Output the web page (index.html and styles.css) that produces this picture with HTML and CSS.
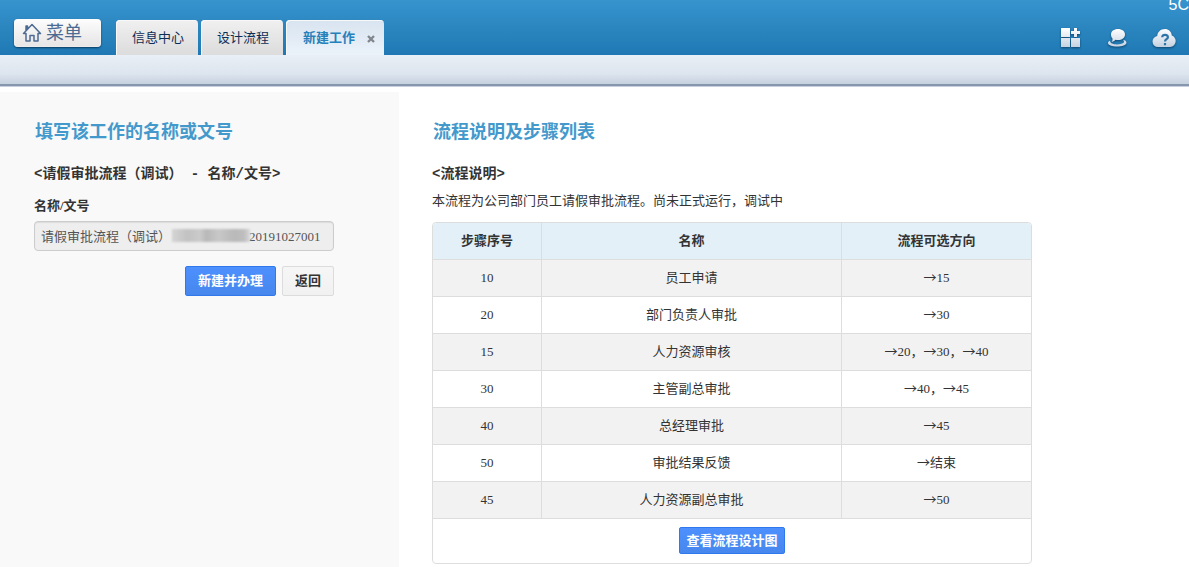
FILE: index.html
```html
<!DOCTYPE html>
<html lang="zh-CN">
<head>
<meta charset="utf-8">
<title>新建工作</title>
<link rel="stylesheet" href="styles.css">
</head>
<body>
<header class="topbar">
  <button class="menu-btn" type="button">
    <svg width="20" height="20" viewBox="0 0 20 20" fill="none" stroke="#4c6b93" stroke-width="1.5" stroke-linejoin="round" stroke-linecap="round"><path d="M1.5 10.5 L10 1.5 L18.500 10.500 H16 V18 H12 V12.500 H8 V18 H4 V10.500 Z M4 7.500 V3 H5.500 V6"/></svg>
    <span>菜单</span>
  </button>
  <nav class="tabs">
    <a class="tab" href="#">信息中心</a>
    <a class="tab" href="#">设计流程</a>
    <div class="tab tab-active"><a href="#">新建工作</a><button class="tab-close" type="button" aria-label="关闭"><svg width="8" height="8" viewBox="0 0 8 8"><path d="M1 1 L7 7 M7 1 L1 7" stroke="#81868d" stroke-width="2.400"/></svg></button></div>
  </nav>
  <div class="tools">
    <button class="tool" type="button" aria-label="应用">
      <svg width="24" height="24" viewBox="0 0 24 24" fill="url(#silver)"><defs><linearGradient id="silver" x1="0" y1="0" x2="0" y2="24" gradientUnits="userSpaceOnUse"><stop offset="0.100" stop-color="#ffffff"/><stop offset="0.900" stop-color="#c3d0e0"/></linearGradient></defs><path d="M3 2h9v9h-9z M3 12h9v9h-9z M13 12h9v9h-9z M16 2h3v3h3v3h-3v3h-3v-3h-3v-3h3z"/></svg>
    </button>
    <button class="tool" type="button" aria-label="消息">
      <svg width="24" height="24" viewBox="0 0 24 24" fill="url(#silver)"><path d="M13 3c4.200 0 7 2.300 7 5.400 0 3.200-3 5.600-7 5.600-1 0-1.800-.1-2.500-.3-1.300 1.400-2.800 2-4 2.100.9-.9 1.100-2 1-3.400C6.500 11.400 6 10 6 8.400 6 5.300 8.800 3 13 3z"/><path d="M5 14.800c-1.400.5-2 1.300-2 2.200 0 2.200 4 3.500 9 3.500s9.500-1.500 9.500-3.800c0-1.500-1.500-2.400-3.500-2.900 1.200 1.200 1.500 2.400.2 3.300-1.400.9-3.700 1.300-6.200 1.300-4 0-7-1.200-7-3.600z"/></svg>
    </button>
    <button class="tool" type="button" aria-label="帮助">
      <svg width="24" height="24" viewBox="0 0 24 24" fill="url(#silver)"><path d="M6 21a5.500 5.500 0 0 1-5.500-5.500c0-3 2-5 4.700-5.600C5.600 5.800 8.800 3 12.800 3c3.800 0 6.700 2.600 7 6.400 2.300.8 3.900 3 3.900 5.700A5.800 5.800 0 0 1 18 21z"/><path d="M10.200 11.300c0-1.600 1.200-2.500 2.800-2.500s2.900.9 2.900 2.400c0 2-2.900 2.100-2.900 4.300M13 17v2.300" fill="none" stroke="#2c75aa" stroke-width="2.200"/></svg>
    </button>
  </div>
  <div class="weather">5C</div>
</header>
<div class="subbar"></div>
<main class="content">
  <section class="form-panel">
    <h1 class="title">填写该工作的名称或文号</h1>
    <form>
      <h2 class="subtitle">&lt;请假审批流程（调试） - 名称/文号&gt;</h2>
      <label class="label" for="docname">名称/文号</label>
      <div class="field">
        <input class="text-input" id="docname" type="text" value="请假审批流程（调试）　　　　　　  20191027001" readonly>
        <span class="smudge"></span>
      </div>
      <div class="actions">
        <button class="btn btn-primary" type="button">新建并办理</button>
        <button class="btn" type="button">返回</button>
      </div>
    </form>
  </section>
  <section class="info-panel">
    <h1 class="title">流程说明及步骤列表</h1>
    <h2 class="subtitle">&lt;流程说明&gt;</h2>
    <p class="desc">本流程为公司部门员工请假审批流程。尚未正式运行，调试中</p>
    <table class="steps">
      <colgroup><col class="col-no"><col class="col-name"><col class="col-next"></colgroup>
      <thead><tr><th>步骤序号</th><th>名称</th><th>流程可选方向</th></tr></thead>
      <tbody>
        <tr><td>10</td><td>员工申请</td><td><span class="arrow">→</span>15</td></tr>
        <tr><td>20</td><td>部门负责人审批</td><td><span class="arrow">→</span>30</td></tr>
        <tr><td>15</td><td>人力资源审核</td><td><span class="arrow">→</span>20，<span class="arrow">→</span>30，<span class="arrow">→</span>40</td></tr>
        <tr><td>30</td><td>主管副总审批</td><td><span class="arrow">→</span>40，<span class="arrow">→</span>45</td></tr>
        <tr><td>40</td><td>总经理审批</td><td><span class="arrow">→</span>45</td></tr>
        <tr><td>50</td><td>审批结果反馈</td><td><span class="arrow">→</span>结束</td></tr>
        <tr><td>45</td><td>人力资源副总审批</td><td><span class="arrow">→</span>50</td></tr>
      </tbody>
      <tfoot><tr><td colspan="3"><button class="btn btn-primary btn-small" type="button">查看流程设计图</button></td></tr></tfoot>
    </table>
  </section>
</main>
</body>
</html>
```

FILE: styles.css
```css
* { box-sizing: border-box; }
body {
  margin: 0;
  min-height: 100vh;
  display: flex;
  flex-direction: column;
  background: #fff;
  color: #333;
  font: 13px/20px "Liberation Serif", "Noto Sans CJK SC", sans-serif;
}
button, input { font: inherit; color: inherit; }
button { cursor: pointer; }

.topbar {
  position: relative;
  display: flex;
  height: 55px;
  padding-left: 14px;
  background: linear-gradient(#3794cd, #1f78b3);
}
.menu-btn {
  display: flex;
  align-items: center;
  gap: 4px;
  width: 87px;
  height: 28px;
  margin-top: 19px;
  padding: 0 8px;
  border: 0;
  border-radius: 4px;
  background: linear-gradient(#fdfdfd, #e6e4e4);
  box-shadow: 0 1px 2px rgba(0, 30, 60, 0.7), inset 0 0 2px #fff;
  color: #4c6b93;
  font-size: 18px;
  line-height: 28px;
  white-space: nowrap;
}
.tabs {
  display: flex;
  align-items: flex-end;
  gap: 3px;
  margin-left: 15px;
}
.tab {
  display: flex;
  align-items: center;
  height: 35px;
  padding: 0 14px 0 16px;
  border-radius: 4px 4px 0 0;
  background: linear-gradient(#f0f0f0, #dcdcdc);
  box-shadow: inset 1px 1px 0 #f8f8f8;
  color: #0c2d57;
  text-decoration: none;
  white-space: nowrap;
}
.tab-active {
  gap: 12px;
  padding: 0 9px 0 17px;
  background: linear-gradient(#d8e4f0, #ebf2fa);
  font-weight: bold;
}
.tab-active a { color: #2580bb; text-decoration: none; }
.tab-close {
  display: flex;
  padding: 2px 0 0;
  border: 0;
  background: none;
}
.tools {
  display: flex;
  gap: 23px;
  margin: 26px 13px 0 auto;
}
.tool {
  width: 24px;
  height: 24px;
  padding: 0;
  border: 0;
  background: none;
  filter: drop-shadow(0 1px 1px rgba(0, 30, 60, 0.6));
}
.weather {
  position: absolute;
  top: -5px;
  right: 0;
  color: #fff;
  font: 16px/20px "Liberation Sans", sans-serif;
}
.subbar {
  height: 31px;
  border-bottom: 2px solid #8596ae;
  background: linear-gradient(#e9eff6, #dde5ee 65%, #c6d1df);
  box-shadow: 0 1px 0 #c8d0dc;
}

.content {
  display: flex;
  flex: 1;
  margin-top: 6px;
}
.form-panel {
  flex: 0 0 399px;
  padding: 27px 65px 0 34px;
  background: #f9f9f9;
}
.info-panel {
  flex: 1;
  padding: 27px 33px 0;
}
.title {
  margin: 0 0 18px;
  padding-left: 1px;
  color: #4499cc;
  font-size: 18px;
  line-height: 26px;
  font-weight: bold;
}
.subtitle {
  margin: 0;
  font: bold 14px/22px "Liberation Mono", "Noto Sans CJK SC", sans-serif;
  white-space: nowrap;
}
.label {
  display: block;
  margin: 11px 0 5px;
  font-weight: bold;
}
.field { position: relative; }
.text-input {
  display: block;
  width: 100%;
  height: 30px;
  padding: 0 6px 2px;
  border: 1px solid #ccc;
  border-radius: 4px;
  background: #eee;
  box-shadow: inset 0 1px 1px rgba(0, 0, 0, 0.08);
  color: #555;
}
.smudge {
  position: absolute;
  left: 138px;
  top: 8px;
  width: 78px;
  height: 13px;
  background: linear-gradient(90deg, #d4d4d4, #c2c2c2 20%, #cbcbcb 36%, #b8b8b8 44%, #c8c8c8 60%, #b9b9b9 80%, #bebebe 92%, #d8d8d8);
  filter: blur(1px);
}
.actions {
  display: flex;
  justify-content: flex-end;
  gap: 6px;
  margin-top: 15px;
}
.btn {
  height: 30px;
  padding: 0 12px;
  border: 1px solid #dcdcdc;
  border-radius: 2px;
  background: linear-gradient(#f6f6f6, #f1f1f1);
  font-weight: bold;
  white-space: nowrap;
}
.btn-primary {
  border-color: #3079ed;
  background: linear-gradient(#4d90fe, #4787ed);
  color: #fff;
}
.btn-small {
  height: 27px;
  padding: 0 6px;
}
.desc { margin: 6px 0 11px; }

.steps {
  width: 600px;
  max-width: 100%;
  table-layout: fixed;
  border: 1px solid #ddd;
  border-radius: 4px;
  border-collapse: separate;
  border-spacing: 0;
  overflow: hidden;
  text-align: center;
}
.col-no { width: 108px; }
.col-next { width: 190px; }
.steps th, .steps td {
  padding: 8px;
  border-left: 1px solid #ddd;
}
.steps td { border-top: 1px solid #ddd; }
.steps th:first-child, .steps td:first-child { border-left: 0; }
.steps thead { background: #e4f0f8; }
.steps tbody tr:nth-child(odd) { background: #f2f2f2; }
.steps tfoot td { padding-bottom: 9px; }
.steps tfoot .btn { display: block; margin: 0 auto; }
.arrow {
  font-family: "Noto Sans CJK SC", sans-serif;
  line-height: 1;
}
```
